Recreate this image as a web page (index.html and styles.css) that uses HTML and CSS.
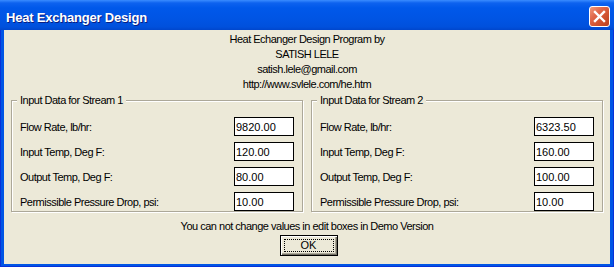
FILE: index.html
```html
<!DOCTYPE html>
<html lang="en">
<head>
    <meta charset="UTF-8">
    <meta name="viewport" content="width=device-width, initial-scale=1.0">
    <title>Heat Exchanger Design</title>
    <link rel="stylesheet" href="styles.css">
</head>
<body>
    <div class="window">
        <div class="titlebar">
            <span class="title">Heat Exchanger Design</span>
            <button class="close" title="Close">
                <svg width="19" height="19" viewBox="0 0 19 19">
                    <path d="M5 5 L14 14 M14 5 L5 14" stroke="#fff" stroke-width="2.4" stroke-linecap="square"/>
                </svg>
            </button>
        </div>
        <div class="client">
            <div class="about">
                <p>Heat Echanger Design Program by</p>
                <p>SATISH LELE</p>
                <p>satish.lele@gmail.com</p>
                <p>http://www.svlele.com/he.htm</p>
            </div>
            <div class="streams">
                <div class="group">
                    <div class="group-title">Input Data for Stream 1</div>
                    <div class="rows">
                        <div class="row"><span>Flow Rate, lb/hr:</span><input class="edit" value="9820.00" readonly></div>
                        <div class="row"><span>Input Temp, Deg F:</span><input class="edit" value="120.00" readonly></div>
                        <div class="row"><span>Output Temp, Deg F:</span><input class="edit" value="80.00" readonly></div>
                        <div class="row"><span>Permissible Pressure Drop, psi:</span><input class="edit" value="10.00" readonly></div>
                    </div>
                </div>
                <div class="group">
                    <div class="group-title">Input Data for Stream 2</div>
                    <div class="rows">
                        <div class="row"><span>Flow Rate, lb/hr:</span><input class="edit" value="6323.50" readonly></div>
                        <div class="row"><span>Input Temp, Deg F:</span><input class="edit" value="160.00" readonly></div>
                        <div class="row"><span>Output Temp, Deg F:</span><input class="edit" value="100.00" readonly></div>
                        <div class="row"><span>Permissible Pressure Drop, psi:</span><input class="edit" value="10.00" readonly></div>
                    </div>
                </div>
            </div>
            <p class="note">You can not change values in edit boxes in Demo Version</p>
            <div class="actions">
                <button class="ok"><span>OK</span></button>
            </div>
        </div>
    </div>
</body>
</html>
```

FILE: styles.css
```css
* {
    margin: 0;
    padding: 0;
    box-sizing: border-box;
}
body {
    width: 614px;
    height: 267px;
    overflow: hidden;
    background: #0054e3;
}
.window {
    width: 614px;
    height: 267px;
    display: flex;
    flex-direction: column;
    background: #0055e5;
    box-shadow: inset 1px 0 0 #0831d9, inset -1px 0 0 #0831d9, inset 0 -1px 0 #0831d9;
}
.titlebar {
    height: 30px;
    display: flex;
    align-items: flex-start;
    justify-content: space-between;
    background: linear-gradient(#3a8cff 0px, #0d62ef 3px, #0058ea 8px, #0054e3 20px, #0050dc 27px, #0046cc 30px);
}
.title {
    margin: 10px 0 0 6px;
    font-family: "Liberation Sans", Arial, sans-serif;
    font-weight: bold;
    font-size: 13px;
    line-height: 15px;
    letter-spacing: -0.2px;
    color: #fff;
    text-shadow: 1px 1px 0 #0a1e80;
}
.close {
    width: 21px;
    height: 21px;
    margin: 6px 4px 0 0;
    border: 1px solid #fff;
    border-radius: 3px;
    background: linear-gradient(135deg, #f29a7c 0%, #e0684a 35%, #d0522f 65%, #b8401f 100%);
    display: flex;
    align-items: center;
    justify-content: center;
}
.close svg {
    display: block;
}
.client {
    height: 234px;
    margin: 0 4px;
    padding-top: 2px;
    background: #ece9d8;
    font-family: "Liberation Sans", Arial, sans-serif;
    font-size: 11px;
    letter-spacing: -0.5px;
    color: #000;
}
.about p {
    line-height: 15px;
    text-align: center;
}
.streams {
    display: flex;
    gap: 8px;
    padding: 0 7px;
    margin-top: 8px;
}
.group {
    width: 292px;
    padding: 0 8px;
    border: 1px solid #aca899;
    box-shadow: inset 1px 1px 0 #fff, 1px 1px 0 #fff;
}
.group-title {
    display: table;
    margin: -7px 0 0 -3px;
    padding: 0 3px;
    line-height: 13px;
    background: #ece9d8;
}
.rows {
    margin-top: 10px;
    display: flex;
    flex-direction: column;
    gap: 6px;
}
.row {
    height: 19px;
    display: flex;
    align-items: center;
    justify-content: space-between;
}
.edit {
    width: 60px;
    height: 19px;
    padding: 0 1px;
    border: 1px solid #000;
    background: #fff;
    font-family: "Liberation Sans", Arial, sans-serif;
    font-size: 11px;
    letter-spacing: 0;
    color: #000;
    outline: none;
}
.note {
    margin-top: 7px;
    line-height: 15px;
    text-align: center;
}
.actions {
    margin-top: 1px;
    display: flex;
    justify-content: center;
    padding-left: 3px;
}
.ok {
    width: 58px;
    height: 21px;
    padding: 3px;
    border: 1px solid #000;
    background: #ece9d8;
    box-shadow: inset 1px 1px 0 #fff, inset -1px -1px 0 #716f64, inset -2px -2px 0 #aca899;
    font-family: "Liberation Sans", Arial, sans-serif;
    font-size: 11px;
    color: #000;
}
.ok span {
    display: block;
    height: 13px;
    line-height: 11px;
    border: 1px dotted #000;
}
```
